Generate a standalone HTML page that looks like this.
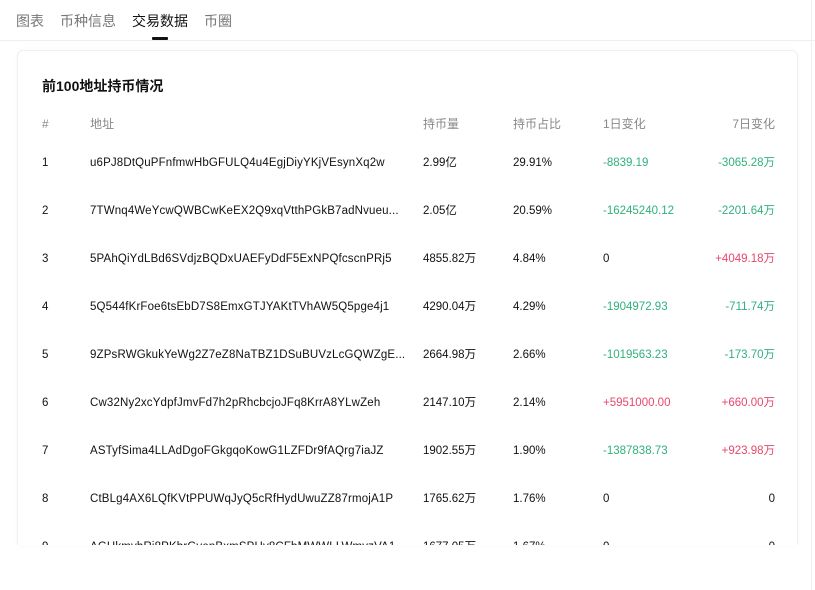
<!DOCTYPE html>
<html><head><meta charset="utf-8"><style>
*{margin:0;padding:0;box-sizing:border-box}
body{width:815px;height:590px;background:#fff;font-family:"Liberation Sans","Noto Sans CJK SC",sans-serif;position:relative;overflow:hidden;color:#111}
.tab{position:absolute;top:11px;font-size:14px;color:#777}
.ul{position:absolute;left:152px;top:37px;width:16px;height:3px;background:#111;border-radius:1px}
.hr{position:absolute;left:0;top:40px;width:815px;height:1px;background:#eee}
.card{position:absolute;left:17px;top:50px;width:781px;height:495px;border:1px solid #f0f0f0;border-bottom:none;border-radius:6px 6px 0 0;overflow:hidden;box-shadow:0 0 4px rgba(0,0,0,0.03)}
.title{position:absolute;left:24px;top:25px;font-size:14px;font-weight:bold}
.r{position:absolute;left:0;width:781px;height:20px;font-size:11.5px;line-height:20px}
.r span{position:absolute;top:0;white-space:nowrap;line-height:20px;height:20px}
.h{color:#888;font-size:12px}
.g{color:#2fb17d}.d{color:#e8476a}
.c1{left:24px}.c2{left:72px;width:322px;overflow:hidden;letter-spacing:0.15px}.c3{left:405px}.c4{left:495px}.c5{left:585px}.c6{right:24px}
.sb{position:absolute;left:811px;top:0;width:1px;height:590px;background:#eee}
</style></head><body>
<div class="tab" style="left:16px">图表</div>
<div class="tab" style="left:60px">币种信息</div>
<div class="tab" style="left:132px;color:#111">交易数据</div>
<div class="tab" style="left:204px">币圈</div>
<div class="ul"></div>
<div class="hr"></div>
<div class="sb"></div>
<div class="card">
<div class="title">前100地址持币情况</div>
<div class="r h" style="top:63px"><span class="c1">#</span><span class="c2">地址</span><span class="c3">持币量</span><span class="c4">持币占比</span><span class="c5">1日变化</span><span class="c6">7日变化</span></div>
<div class="r" style="top:102px"><span class="c1">1</span><span class="c2">u6PJ8DtQuPFnfmwHbGFULQ4u4EgjDiyYKjVEsynXq2w</span><span class="c3">2.99亿</span><span class="c4">29.91%</span><span class="c5 g">-8839.19</span><span class="c6 g">-3065.28万</span></div>
<div class="r" style="top:150px"><span class="c1">2</span><span class="c2">7TWnq4WeYcwQWBCwKeEX2Q9xqVtthPGkB7adNvueu...</span><span class="c3">2.05亿</span><span class="c4">20.59%</span><span class="c5 g">-16245240.12</span><span class="c6 g">-2201.64万</span></div>
<div class="r" style="top:198px"><span class="c1">3</span><span class="c2">5PAhQiYdLBd6SVdjzBQDxUAEFyDdF5ExNPQfcscnPRj5</span><span class="c3">4855.82万</span><span class="c4">4.84%</span><span class="c5">0</span><span class="c6 d">+4049.18万</span></div>
<div class="r" style="top:246px"><span class="c1">4</span><span class="c2">5Q544fKrFoe6tsEbD7S8EmxGTJYAKtTVhAW5Q5pge4j1</span><span class="c3">4290.04万</span><span class="c4">4.29%</span><span class="c5 g">-1904972.93</span><span class="c6 g">-711.74万</span></div>
<div class="r" style="top:294px"><span class="c1">5</span><span class="c2">9ZPsRWGkukYeWg2Z7eZ8NaTBZ1DSuBUVzLcGQWZgE...</span><span class="c3">2664.98万</span><span class="c4">2.66%</span><span class="c5 g">-1019563.23</span><span class="c6 g">-173.70万</span></div>
<div class="r" style="top:342px"><span class="c1">6</span><span class="c2">Cw32Ny2xcYdpfJmvFd7h2pRhcbcjoJFq8KrrA8YLwZeh</span><span class="c3">2147.10万</span><span class="c4">2.14%</span><span class="c5 d">+5951000.00</span><span class="c6 d">+660.00万</span></div>
<div class="r" style="top:390px"><span class="c1">7</span><span class="c2">ASTyfSima4LLAdDgoFGkgqoKowG1LZFDr9fAQrg7iaJZ</span><span class="c3">1902.55万</span><span class="c4">1.90%</span><span class="c5 g">-1387838.73</span><span class="c6 d">+923.98万</span></div>
<div class="r" style="top:438px"><span class="c1">8</span><span class="c2">CtBLg4AX6LQfKVtPPUWqJyQ5cRfHydUwuZZ87rmojA1P</span><span class="c3">1765.62万</span><span class="c4">1.76%</span><span class="c5">0</span><span class="c6">0</span></div>
<div class="r" style="top:486px"><span class="c1">9</span><span class="c2">AGHkmvhRi8PKbrGvenBxmSPHv8CFbMWWLLWmvzVA1</span><span class="c3">1677.05万</span><span class="c4">1.67%</span><span class="c5">0</span><span class="c6">0</span></div>
</div>
</body></html>
